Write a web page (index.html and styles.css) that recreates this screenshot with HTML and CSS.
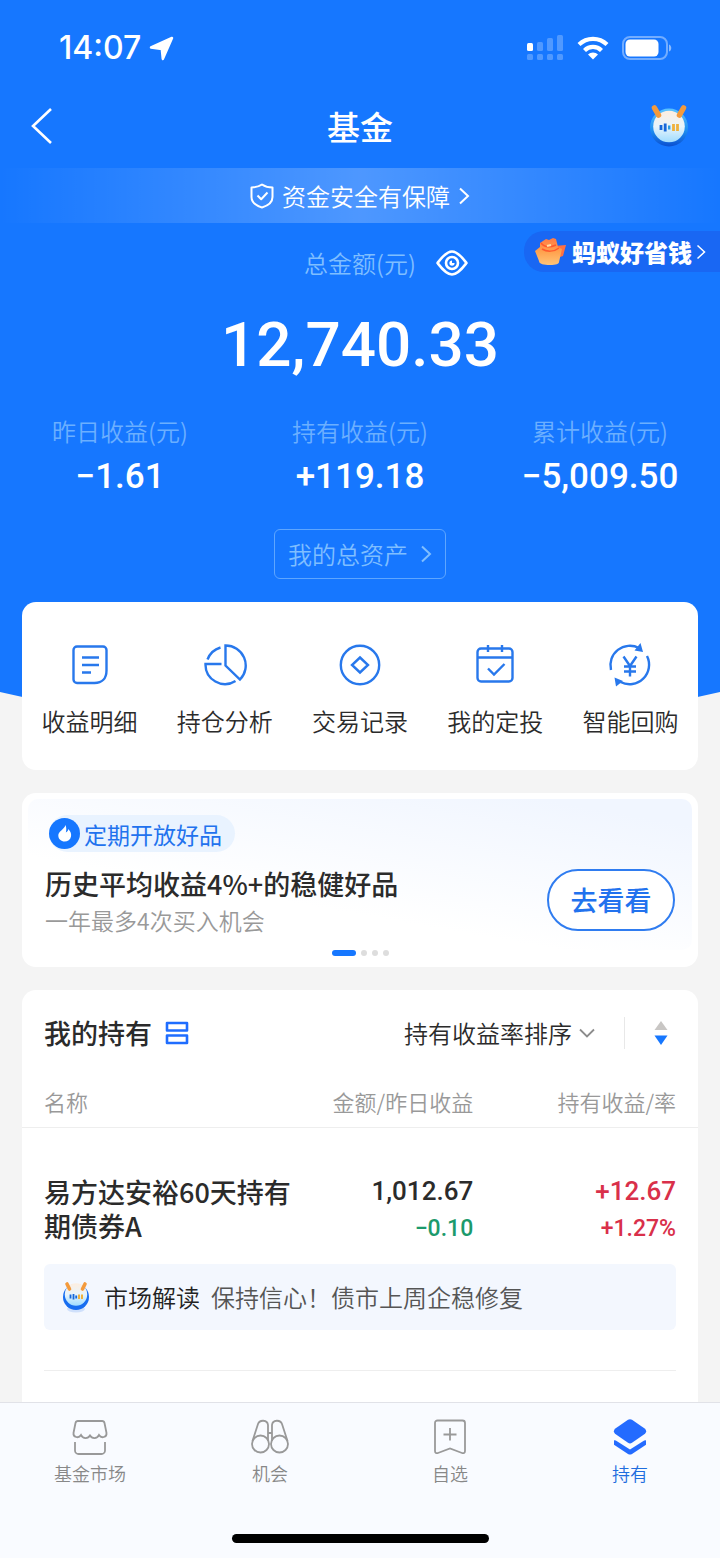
FILE: index.html
```html
<!DOCTYPE html>
<html lang="zh-CN">
<head>
<meta charset="utf-8">
<meta name="viewport" content="width=device-width, initial-scale=1">
<title>基金</title>
<link rel="stylesheet" href="styles.css">
</head>
<body>
<svg class="defs" aria-hidden="true">
  <defs>
    <linearGradient id="face" x1="0" y1="0" x2="0" y2="1"><stop offset="0" stop-color="#fdeee0"/><stop offset=".5" stop-color="#e8f4fb"/><stop offset="1" stop-color="#9fdcff"/></linearGradient>
    <linearGradient id="ring" x1="0" y1="0" x2="0" y2="1"><stop offset="0" stop-color="#5cc5ff"/><stop offset=".6" stop-color="#1d8bf0"/><stop offset="1" stop-color="#0a4fd0"/></linearGradient>
    <linearGradient id="bag" x1="0" y1="0" x2="0" y2="1"><stop offset="0" stop-color="#ff7a45"/><stop offset=".5" stop-color="#ffa14d"/><stop offset="1" stop-color="#ffc477"/></linearGradient>
    <symbol id="mascot" viewBox="0 0 40 44">
      <circle cx="20" cy="23.500" r="19" fill="url(#ring)"/>
      <circle cx="20" cy="22.500" r="15.800" fill="url(#face)"/>
      <path d="M5.500 4L9.500 11M34.500 4L30.500 11" stroke="#f39a3c" stroke-width="5.500" stroke-linecap="round"/>
      <path d="M12 21v5M16.200 19.500v8" stroke="#1766d8" stroke-width="2.800"/>
      <path d="M20.200 21.500v4" stroke="#2e9be0" stroke-width="2.400"/>
      <path d="M24.500 20v7M28.500 20v7" stroke="#efb13d" stroke-width="2.800"/>
    </symbol>
    <symbol id="mascot-small" viewBox="0 0 28 32">
      <ellipse cx="14" cy="28" rx="9" ry="3.500" fill="#cfe0fb"/>
      <circle cx="14" cy="16" r="13" fill="#176df0"/>
      <circle cx="14" cy="13.500" r="11.200" fill="url(#face)"/>
      <path d="M5 3L7.500 8M23 3L20.500 8" stroke="#f39a3c" stroke-width="3.600" stroke-linecap="round"/>
      <path d="M8.500 13.500v4M11.500 13v5.500M14.200 14.500v3" stroke="#1766d8" stroke-width="1.800"/>
      <path d="M17 13.500v4.500M20 13.500v4.500" stroke="#efb13d" stroke-width="2"/>
    </symbol>
  </defs>
</svg>

<header class="hero">
  <div class="status">
    <div class="status-side">
      <span class="clock">14:07</span>
      <svg width="25" height="25" viewBox="0 0 25 25"><path d="M23 2L13.800 23L12.800 13L2 11.500z" fill="#fff" stroke="#fff" stroke-width="2.500" stroke-linejoin="round"/></svg>
    </div>
    <div class="status-side">
      <svg width="38" height="26" viewBox="0 0 38 26">
        <g fill="#fff" fill-opacity=".25"><rect x="11" y="7" width="6" height="9" rx="1.500"/><rect x="21" y="3" width="6" height="13" rx="1.500"/><rect x="31" y="0" width="6" height="16" rx="1.500"/><rect x="1" y="19" width="6" height="6" rx="1.500"/><rect x="11" y="19" width="6" height="6" rx="1.500"/><rect x="21" y="19" width="6" height="6" rx="1.500"/><rect x="31" y="19" width="6" height="6" rx="1.500"/></g>
        <rect x="1" y="8" width="6" height="8" rx="1.500" fill="#fff"/>
      </svg>
      <svg width="32" height="24" viewBox="0 0 32 24"><g fill="none" stroke="#fff" stroke-width="4.200"><path d="M2 8.500a20 20 0 0 1 28 0"/><path d="M7.500 14.500a12 12 0 0 1 17 0"/></g><path d="M16 23.500l-5-5a7 7 0 0 1 10 0z" fill="#fff"/></svg>
      <svg width="50" height="24" viewBox="0 0 50 24"><rect x="1" y="1" width="44" height="22" rx="7" fill="none" stroke="#fff" stroke-opacity=".4" stroke-width="2"/><rect x="3.500" y="3.500" width="33" height="17" rx="4.500" fill="#fff"/><path d="M47 8.500c3 1 3 6 0 7z" fill="#fff" fill-opacity=".5"/></svg>
    </div>
  </div>

  <div class="nav">
    <button class="icon-button" type="button" aria-label="返回"><svg width="22" height="38" viewBox="0 0 22 38"><path d="M20 2L2 19l18 17" fill="none" stroke="#fff" stroke-width="2.600"/></svg></button>
    <h1 class="nav-title">基金</h1>
    <button class="icon-button icon-button-end" type="button" aria-label="助手"><svg width="40" height="44"><use href="#mascot"/></svg></button>
  </div>

  <a class="safety" href="#safety">
    <svg width="24" height="26" viewBox="0 0 24 26"><g fill="none" stroke="#fff" stroke-width="2" stroke-linejoin="round"><path d="M12 1.500c3 2 6.500 3 10.500 3V14c0 5-4 8.500-10.500 10.500C5.500 22.500 1.500 19 1.500 14V4.500C5.500 4.500 9 3.500 12 1.500z"/><path d="M7.500 12.500l3.700 3.800 6.300-6.800"/></g></svg>
    <span>资金安全有保障</span>
    <svg width="12" height="18" viewBox="0 0 12 18"><path d="M2 1.500L10 9l-8 7.500" fill="none" stroke="#fff" stroke-width="2"/></svg>
  </a>

  <section class="summary">
    <a class="saver" href="#saver">
      <svg width="34" height="28" viewBox="0 0 34 28"><path d="M20 8l12-1-3 11-9 3z" fill="#ff7043"/><path d="M6 5l6-4 3 1 4-2 3 1 2 8 4 2-3 13c0 2-3 3-9 3S5 26 5 23L1 13l5-4z" fill="url(#bag)"/><path d="M7 5c3 4 8 5 15 2M8 11c5 3 12 3 17-1" fill="none" stroke="#ff5a2e" stroke-width="1.500"/><path d="M13 8l4-1" stroke="#ffe0a8" stroke-width="2"/></svg>
      <span>蚂蚁好省钱</span>
      <svg width="10" height="16" viewBox="0 0 10 16"><path d="M1.500 1.500L8.500 8l-7 6.500" fill="none" stroke="#fff" stroke-width="1.500"/></svg>
    </a>
    <div class="total-label">
      <span>总金额(元)</span>
      <button class="icon-button" type="button" aria-label="隐藏金额"><svg width="32" height="26" viewBox="0 0 32 26"><g fill="none" stroke="#fff" stroke-width="2.600" stroke-linejoin="round"><path d="M1.500 13C5 8.500 10 1.500 16 1.500S27 8.500 30.500 13C27 17.500 22 24.500 16 24.500S5 17.500 1.500 13z"/><circle cx="16" cy="13" r="6"/></g><path d="M16 10.500a2.600 2.600 0 1 0 2.600 2.600H16z" fill="#fff"/></svg></button>
    </div>
    <p class="total">12,740.33</p>
    <dl class="stats">
      <div><dt>昨日收益(元)</dt><dd>−1.61</dd></div>
      <div><dt>持有收益(元)</dt><dd>+119.18</dd></div>
      <div><dt>累计收益(元)</dt><dd>−5,009.50</dd></div>
    </dl>
    <a class="assets" href="#assets"><span>我的总资产</span><svg width="12" height="18" viewBox="0 0 12 18"><path d="M2 1.500L10 9l-8 7.500" fill="none" stroke="currentColor" stroke-width="2"/></svg></a>
  </section>
</header>

<main class="content">
  <nav class="card shortcuts" aria-label="快捷入口">
    <a href="#detail"><svg width="44" height="44" viewBox="0 0 44 44"><path d="M9 3.500h26a3.500 3.500 0 0 1 3.500 3.500v20.500c0 8-4.500 12.500-12 12.500H9A3.500 3.500 0 0 1 5.500 36.500V7A3.500 3.500 0 0 1 9 3.500z"/><path d="M14 14.500h17M14 22h17M14 29.500h9"/></svg>收益明细</a>
    <a href="#analysis"><svg width="44" height="44" viewBox="0 0 44 44"><path d="M22.500 2.500a20 20 0 0 1 14.500 34L22.500 22.500zM17.500 4.500A20 20 0 0 0 4.500 16.500M18.500 21H2.500a19.500 19.500 0 0 0 30 17"/></svg>持仓分析</a>
    <a href="#records"><svg width="44" height="44" viewBox="0 0 44 44"><circle cx="22" cy="22" r="19.200"/><path d="M22 14.500l8 7.500-8 7.500-8-7.500z"/></svg>交易记录</a>
    <a href="#plan"><svg width="44" height="44" viewBox="0 0 44 44"><rect x="4.500" y="5.500" width="35" height="33" rx="3.500"/><path d="M5 14.500h34M15 2v7M29 2v7M15 25.500l6 6 10.500-10.500"/></svg>我的定投</a>
    <a href="#buyback"><svg width="44" height="44" viewBox="0 0 44 44"><path d="M3 27A19.500 19.500 0 0 1 31 5M39 13A19.500 19.500 0 0 1 12.500 39"/><path class="solid" d="M32.500 0l2.500 9-8.500-1.500zM6.500 34.500l8.500 3.500L8 43.500z"/><path d="M15.500 13.500l6.500 9.500 6.500-9.500M22 23v10.500M16 23.500h12M16 28.500h12"/></svg>智能回购</a>
  </nav>

  <section class="card promo">
    <div class="promo-inner">
      <div class="promo-text">
        <p class="tag"><svg width="31" height="31" viewBox="0 0 31 31"><circle cx="15.500" cy="15.500" r="15.500" fill="#1677ff"/><path d="M16.500 7c1 3 1 5 .3 7.500 1.700-.7 2.400-2 2.500-3.500 2.500 2.500 3.200 5 2.700 7.500-.6 3.200-3.300 5-6.400 5-3.500 0-6.300-2.500-6.300-6 0-4.500 5.700-5.500 7.200-10.500z" fill="#fff"/></svg>定期开放好品</p>
        <h2 class="promo-title">历史平均收益4%+的稳健好品</h2>
        <p class="promo-sub">一年最多4次买入机会</p>
      </div>
      <button class="promo-button" type="button">去看看</button>
    </div>
    <div class="dots"><i class="dot dot-on"></i><i class="dot"></i><i class="dot"></i><i class="dot"></i></div>
  </section>

  <section class="card holdings">
    <div class="holdings-head">
      <h2 class="holdings-title">我的持有</h2>
      <button class="icon-button" type="button" aria-label="切换视图"><svg width="24" height="24" viewBox="0 0 24 24"><path d="M2 2h20v7.500H2zM2 14.500h20V22H2z" fill="none" stroke="#1f6dff" stroke-width="2.600" stroke-linejoin="round"/></svg></button>
      <label class="sort">
        <select aria-label="排序方式"><option>持有收益率排序</option></select>
        <svg width="16" height="10" viewBox="0 0 16 10"><path d="M1 1.500l7 7 7-7" fill="none" stroke="#8c8c8c" stroke-width="1.800"/></svg>
      </label>
      <button class="icon-button order" type="button" aria-label="降序"><svg width="14" height="24" viewBox="0 0 14 24"><path d="M7 0l6.500 9H.5z" fill="#c8c6c4"/><path d="M7 24l6.500-9.500H.5z" fill="#1677ff"/></svg></button>
    </div>
    <table class="funds">
      <thead><tr><th>名称</th><th>金额/昨日收益</th><th>持有收益/率</th></tr></thead>
      <tbody>
        <tr class="fund">
          <th scope="row">易方达安裕60天持有期债券A</th>
          <td><span class="value">1,012.67</span><span class="change down">−0.10</span></td>
          <td><span class="value up">+12.67</span><span class="change up">+1.27%</span></td>
        </tr>
        <tr><td class="note-cell" colspan="3">
          <a class="note" href="#note"><svg width="28" height="32"><use href="#mascot-small"/></svg><span class="note-title">市场解读</span><span>保持信心！债市上周企稳修复</span></a>
        </td></tr>
      </tbody>
    </table>
  </section>
</main>

<footer class="footer">
  <nav class="tabs" aria-label="主导航">
    <a href="#market"><svg width="36" height="36" viewBox="0 0 36 36"><path d="M6 2h24a2.500 2.500 0 0 1 2.500 2l2 10c.5 4-5 6-7.500 2-2 4-7 4-9 .5-2 3.500-7 3.500-9-.5-2.500 4-8 2-7.500-2l2-10A2.500 2.500 0 0 1 6 2zM3 23v8.500A3.500 3.500 0 0 0 6.500 35h23a3.500 3.500 0 0 0 3.500-3.500V23"/></svg>基金市场</a>
    <a href="#chance"><svg width="38" height="36" viewBox="0 0 38 36"><circle cx="9.500" cy="25" r="8.500"/><circle cx="28.500" cy="25" r="8.500"/><path d="M1.500 22L7 5c1.500-4.500 9.500-4.500 10 1v16M36.500 22L31 5c-1.500-4.500-9.500-4.500-10 1v16M17 14h4"/></svg>机会</a>
    <a href="#watch"><svg width="36" height="36" viewBox="0 0 36 36"><path d="M5.500 1.500h25A2.500 2.500 0 0 1 33 4v28c0 2-1.500 2.500-3 2L18 29.500 6 34c-1.500.5-3 0-3-2V4a2.500 2.500 0 0 1 2.500-2.500zM18 9v12.500M11.500 15.500h13"/></svg>自选</a>
    <a class="tab-on" href="#holding" aria-current="page"><svg width="36" height="36" viewBox="0 0 36 36"><g fill="#246bff" stroke="none"><path d="M16 .8a4 4 0 0 1 4 0l13 9c1.500 1.500 1.500 3.500 0 5l-13 9a4 4 0 0 1-4 0l-13-9c-1.500-1.500-1.500-3.500 0-5z"/><path d="M2 21.500c.8-.5 1.500-.3 2.200.2L18 30.500l13.800-8.800c.7-.5 1.400-.7 2.200-.2v4.200L20 35a4 4 0 0 1-4 0L2 25.700z"/></g></svg>持有</a>
  </nav>
  <div class="home-bar"></div>
</footer>
</body>
</html>
```

FILE: styles.css
```css
* { box-sizing: border-box; }

body {
  margin: 0;
  min-height: 100vh;
  display: flex;
  flex-direction: column;
  background: #f4f4f4;
  color: #2b2b2b;
  font-family: "Noto Sans CJK SC", sans-serif;
  font-size: 24px;
  line-height: 32px;
  font-weight: 350;
}

h1, h2, p, dl, dd { margin: 0; }
a { color: inherit; text-decoration: none; }
svg { display: block; flex: none; }
.defs { position: absolute; width: 0; height: 0; }

.icon-button {
  display: flex;
  padding: 0;
  border: 0;
  background: none;
}

.hero {
  padding-bottom: 154px;
  background: #1677ff;
  color: #fff;
  clip-path: circle(1600px at 50% calc(100% - 1600px));
}

.status {
  display: flex;
  justify-content: space-between;
  align-items: center;
  height: 96px;
  padding: 0 48px 0 59px;
}
.status-side { display: flex; align-items: center; gap: 8px; }
.status-side + .status-side { gap: 13px; }
.clock { font: 500 32px/40px Inter, sans-serif; }

.nav {
  display: grid;
  grid-template-columns: 1fr auto 1fr;
  align-items: center;
  height: 60px;
  margin-bottom: 12px;
  padding: 0 31px;
}
.icon-button-end { justify-self: end; }
.nav-title { font-size: 33px; line-height: 48px; font-weight: 500; }

.safety {
  display: flex;
  justify-content: center;
  align-items: center;
  gap: 8px;
  height: 55px;
  background: linear-gradient(90deg, rgba(255,255,255,0), rgba(255,255,255,.24) 50%, rgba(255,255,255,0));
}

.summary {
  position: relative;
  display: flex;
  flex-direction: column;
  align-items: center;
  padding-top: 24px;
}
.saver {
  position: absolute;
  top: 8px;
  right: 0;
  display: flex;
  align-items: center;
  gap: 4px;
  height: 41px;
  padding: 0 14px 0 10px;
  border-radius: 20px 0 0 20px;
  background: #1967f3;
  font-weight: 900;
}
.total-label {
  display: flex;
  align-items: center;
  gap: 20px;
  height: 32px;
  padding-left: 52px;
  color: #7fbeff;
}
.total {
  margin: 30px 0 34px;
  font: 500 62px/72px Roboto, sans-serif;
}
.stats {
  display: grid;
  grid-template-columns: repeat(3, 1fr);
  width: 100%;
  text-align: center;
}
.stats dt { color: #6bafff; }
.stats dd { margin-top: 10px; font: 500 35px/40px Roboto, sans-serif; }
.assets {
  display: flex;
  align-items: center;
  gap: 12px;
  height: 50px;
  margin-top: 32px;
  padding: 0 13px;
  border: 1px solid #5ea6ff;
  border-radius: 6px;
  color: #7fbeff;
}

.content {
  flex: 1;
  position: relative;
  display: flex;
  flex-direction: column;
  gap: 23px;
  margin-top: -131px;
  padding: 0 22px;
}
.card { border-radius: 14px; background: #fff; }

.shortcuts {
  display: grid;
  grid-template-columns: repeat(5, 1fr);
  padding: 41px 0 33px;
}
.shortcuts a {
  display: flex;
  flex-direction: column;
  align-items: center;
  gap: 18px;
}
.shortcuts svg { fill: none; stroke: #2878ec; stroke-width: 2.4px; }
.shortcuts .solid { fill: #2878ec; stroke: none; }

.promo { padding: 6px 6px 11px; }
.promo-inner {
  display: flex;
  justify-content: space-between;
  align-items: flex-end;
  padding: 16px 17px 14px;
  border-radius: 10px;
  background: linear-gradient(190deg, #f1f6ff 10%, #fff 65%);
}
.tag {
  display: inline-flex;
  align-items: center;
  gap: 4px;
  height: 37px;
  margin-left: 4px;
  padding-right: 13px;
  border-radius: 19px;
  background: #e9f3ff;
  color: #2272ee;
  font-size: 23px;
  font-weight: 400;
}
.promo-title { margin-top: 9px; font-size: 27px; line-height: 40px; font-weight: 500; }
.promo-sub { color: #999; font-size: 23px; }
.promo-button {
  width: 128px;
  height: 62px;
  margin-bottom: 5px;
  border: 2px solid #2f7cf0;
  border-radius: 31px;
  background: #fff;
  color: #2272ee;
  font: 500 27px/40px "Noto Sans CJK SC", sans-serif;
}
.dots { display: flex; justify-content: center; gap: 5px; }
.dot { width: 6px; height: 6px; border-radius: 3px; background: #ddd; }
.dot-on { width: 24px; background: #1677ff; }

.holdings { flex: 1; border-radius: 14px 14px 0 0; }
.holdings-head {
  display: flex;
  align-items: center;
  gap: 13px;
  height: 86px;
  padding: 0 30px 0 22px;
}
.holdings-title { font-size: 27px; line-height: 40px; font-weight: 500; }
.sort { display: flex; align-items: center; gap: 7px; margin-left: auto; }
.sort select {
  padding: 0;
  border: 0;
  background: none;
  appearance: none;
  color: #2b2b2b;
  font: 350 24px/32px "Noto Sans CJK SC", sans-serif;
}
.order {
  align-items: center;
  height: 32px;
  margin-left: 16px;
  padding-left: 29px;
  border-left: 1px solid #e8e8e8;
}

.funds { width: 100%; border-collapse: collapse; table-layout: fixed; }
.funds th:nth-child(n+2) { width: 30%; }
.funds th, .funds td {
  padding: 0 22px;
  text-align: right;
  vertical-align: top;
}
.funds th:first-child { text-align: left; }
.funds thead th {
  height: 51px;
  padding-top: 9px;
  border-bottom: 1px solid #eee;
  color: #999;
  font-size: 22px;
  font-weight: 350;
  white-space: nowrap;
}
.funds .fund th {
  padding: 47px 0 21px 22px;
  font-size: 27px;
  line-height: 34px;
  font-weight: 500;
}
.funds .fund td { padding-top: 43px; }
.value, .change { display: block; font: 500 26px/40px Roboto, sans-serif; }
.change { font-size: 23px; line-height: 36px; }
.up { color: #d9304a; }
.down { color: #1c9a6c; }

.note {
  display: flex;
  align-items: center;
  gap: 11px;
  height: 66px;
  margin-bottom: 40px;
  padding: 0 18px;
  border-radius: 6px;
  background: #f3f7fe;
  color: #555;
}
.note-title { margin-left: 3px; color: #222; }
.funds .note-cell::after { content: ""; display: block; height: 1px; background: #eee; }

.footer { border-top: 1px solid #e1e2e8; background: #f9fbff; }
.tabs { display: grid; grid-template-columns: repeat(4, 1fr); padding: 16px 0 48px; }
.tabs a {
  display: flex;
  flex-direction: column;
  align-items: center;
  gap: 5px;
  color: #888;
  font-size: 18px;
  line-height: 26px;
}
.tabs svg { fill: none; stroke: #999; stroke-width: 1.8px; }
.tabs .tab-on { color: #1f6dde; }
.home-bar { width: 257px; height: 9px; margin: 0 auto 15px; border-radius: 5px; background: #000; }
```
